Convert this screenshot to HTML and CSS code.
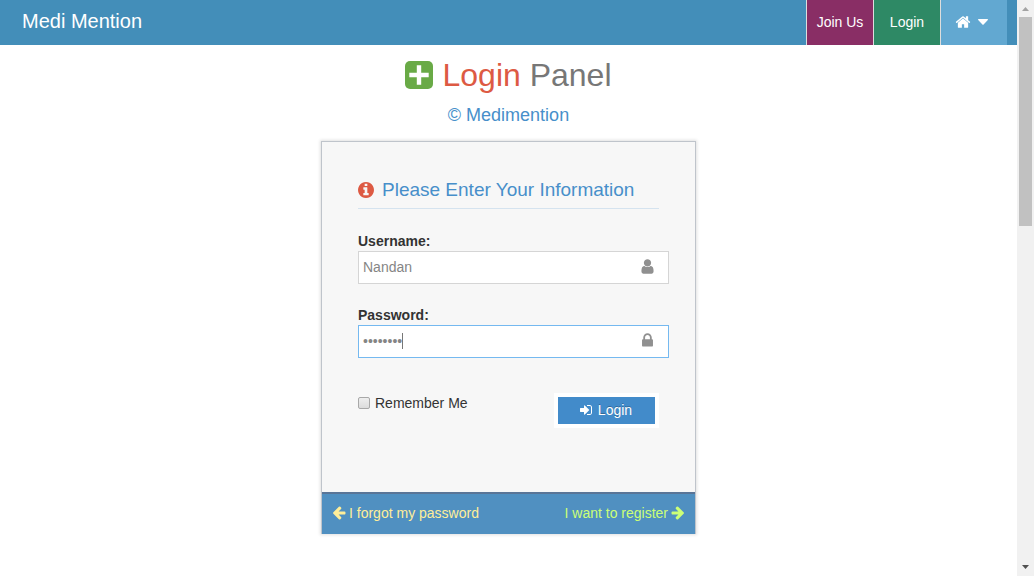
FILE: index.html
```html
<!DOCTYPE html>
<html lang="en">
<head>
<meta charset="utf-8">
<meta name="viewport" content="width=device-width, initial-scale=1">
<title>Medi Mention - Login</title>
<link rel="stylesheet" href="styles.css">
</head>
<body>
<div class="page">
  <header class="navbar">
    <a class="brand" href="#">Medi Mention</a>
    <nav class="nav">
      <a class="nav-item join" href="#">Join Us</a>
      <a class="nav-item login" href="#">Login</a>
      <button class="nav-item home" type="button" aria-label="Home menu">
        <svg class="home-icon" viewBox="0 0 1792 1792" aria-hidden="true"><path d="M1472 992v480q0 26-19 45t-45 19h-384v-384h-256v384h-384q-26 0-45-19t-19-45v-480q0-1 .5-3t.5-3l575-474 575 474q1 2 1 6zm223-69l-62 74q-8 9-21 11h-3q-13 0-21-7l-692-577-692 577q-12 8-24 7-13-2-21-11l-62-74q-8-10-7-23.5t11-21.5l719-599q32-26 76-26t76 26l244 204v-195q0-14 9-23t23-9h192q14 0 23 9t9 23v408l219 182q10 8 11 21.5t-7 23.5z"/></svg>
        <svg class="caret-down" viewBox="0 0 10 6" aria-hidden="true"><path d="M.6 0h8.800q.9.300.4 1L5.600 5.400q-.6.500-1.200 0L.2 1Q-.3.300.6 0z"/></svg>
      </button>
    </nav>
  </header>
  <main class="content">
    <h1 class="title">
      <svg class="plus" viewBox="0 0 28 28" aria-hidden="true"><rect width="28" height="28" rx="5" fill="#69aa46"/><path d="M14 6.500v15M6.500 14h15" stroke="#fff" stroke-width="4.400" stroke-linecap="square"/></svg>
      <span><span class="red">Login</span> Panel</span>
    </h1>
    <p class="company">© Medimention</p>
    <section class="card">
      <form class="card-main">
        <h2 class="card-title">
          <svg class="info" viewBox="128 128 1536 1536" aria-hidden="true"><path d="M1152 1376v-160q0-14-9-23t-23-9h-96v-512q0-14-9-23t-23-9h-320q-14 0-23 9t-9 23v160q0 14 9 23t23 9h96v320h-96q-14 0-23 9t-9 23v160q0 14 9 23t23 9h448q14 0 23-9t9-23zm-128-896v-160q0-14-9-23t-23-9h-192q-14 0-23 9t-9 23v160q0 14 9 23t23 9h192q14 0 23-9t9-23zm640 416q0 209-103 385.5t-279.5 279.5-385.5 103-385.5-103-279.5-279.5-103-385.5 103-385.5 279.5-279.5 385.5-103 385.5 103 279.5 279.5 103 385.5z"/></svg>
          Please Enter Your Information
        </h2>
        <div class="field">
          <label for="username">Username:</label>
          <div class="control">
            <input id="username" class="text" type="text" value="Nandan">
            <svg class="field-icon" viewBox="0 0 1792 1792" aria-hidden="true"><path d="M1536 1399q0 109-62.5 187t-150.5 78h-854q-88 0-150.5-78t-62.5-187q0-85 8.5-160.5t31.5-152 58.5-131 94-89 134.5-34.5q131 128 313 128t313-128q76 0 134.5 34.5t94 89 58.5 131 31.5 152 8.5 160.5zm-256-887q0 159-112.5 271.5t-271.5 112.5-271.5-112.5-112.5-271.5 112.5-271.5 271.5-112.5 271.5 112.5 112.5 271.5z"/></svg>
          </div>
        </div>
        <div class="field">
          <label for="password">Password:</label>
          <div class="control">
            <input id="password" class="text active" type="password" value="medipass">
            <span class="text-caret"></span>
            <svg class="field-icon" viewBox="0 0 1792 1792" aria-hidden="true"><path d="M640 768h512v-192q0-106-75-181t-181-75-181 75-75 181v192zm832 96v576q0 40-28 68t-68 28h-960q-40 0-68-28t-28-68v-576q0-40 28-68t68-28h32v-192q0-184 132-316t316-132 316 132 132 316v192h32q40 0 68 28t28 68z"/></svg>
          </div>
        </div>
        <div class="actions">
          <label class="remember"><input class="check" type="checkbox"><span>Remember Me</span></label>
          <button class="submit" type="button">
            <svg class="icon" viewBox="0 0 1792 1792" aria-hidden="true"><path d="M1312 896q0 26-19 45l-544 544q-19 19-45 19t-45-19-19-45v-288h-448q-26 0-45-19t-19-45v-384q0-26 19-45t45-19h448v-288q0-26 19-45t45-19 45 19l544 544q19 19 19 45zm352-352v704q0 119-84.5 203.5t-203.5 84.5h-320q-13 0-22.5-9.5t-9.5-22.5q0-4-1-20t-.5-26.5 3-23.5 10-19.5 20.5-6.5h320q66 0 113-47t47-113v-704q0-66-47-113t-113-47h-312l-11.5-1-11.5-3-8-5.5-7-9-2-13.5q0-4-1-20t-.5-26.5 3-23.5 10-19.5 20.5-6.5h320q119 0 203.5 84.5t84.5 203.5z"/></svg>
            Login
          </button>
        </div>
      </form>
      <footer class="toolbar">
        <a class="forgot" href="#"><svg class="icon" viewBox="64 128 1664 1664" aria-hidden="true"><path d="M1664 896v128q0 53-32.500 90.500t-84.500 37.500h-704l293 294q38 36 38 90t-38 90l-75 76q-37 37-90 37-52 0-91-37l-651-652q-37-37-37-90 0-52 37-91l651-650q38-38 91-38 52 0 90 38l75 74q38 38 38 91t-38 91l-293 293h704q52 0 84.500 37.500t32.500 90.500z"/></svg>I forgot my password</a>
        <a class="register" href="#">I want to register<svg class="icon flip" viewBox="64 128 1664 1664" aria-hidden="true"><path d="M1664 896v128q0 53-32.500 90.500t-84.500 37.500h-704l293 294q38 36 38 90t-38 90l-75 76q-37 37-90 37-52 0-91-37l-651-652q-37-37-37-90 0-52 37-91l651-650q38-38 91-38 52 0 90 38l75 74q38 38 38 91t-38 91l-293 293h704q52 0 84.500 37.500t32.500 90.500z"/></svg></a>
      </footer>
    </section>
  </main>
</div>
<div class="scrollbar" aria-hidden="true">
  <svg class="arrow" viewBox="0 0 17 17"><path d="M5 11h7L8.500 7z" fill="#a3a3a3"/></svg>
  <div class="track"><div class="thumb"></div></div>
  <svg class="arrow" viewBox="0 0 17 17"><path d="M5 6h7L8.500 10z" fill="#505050"/></svg>
</div>
</body>
</html>
```
FILE: styles.css
```css
* { box-sizing: border-box; }
body {
  margin: 0;
  min-height: 100vh;
  display: grid;
  grid-template-columns: 1fr 17px;
  background: #fff;
  color: #333;
  font: 14px/20px "Liberation Sans", Arial, sans-serif;
}
a { text-decoration: none; }
svg { display: block; flex: none; fill: currentColor; }
button, input { font: inherit; }
.icon { width: 14px; height: 14px; }

.navbar {
  display: flex;
  justify-content: space-between;
  height: 45px;
  padding: 0 10px 0 22px;
  background: #438eb9;
}
.brand { color: #fff; font-size: 20px; line-height: 42px; }
.nav { display: flex; }
.nav-item {
  display: flex;
  align-items: center;
  justify-content: center;
  width: 67px;
  border: 0;
  border-left: 1px solid #ddd;
  padding: 0 0 2px;
  color: #fff;
}
.join { background: #892e65; }
.login { background: #2e8965; }
.home { gap: 7px; padding-right: 5px; background: #62a8d1; }
.home-icon { width: 16px; height: 16px; }
.caret-down { width: 10px; height: 6px; }

.content { padding-top: 10px; }
.title {
  display: flex;
  align-items: center;
  justify-content: center;
  gap: 9px;
  margin: 0;
  color: #777;
  font-size: 32px;
  font-weight: 400;
  line-height: 40px;
}
.plus { width: 28px; height: 28px; }
.red { color: #dd5a43; }
.company {
  margin: 10px 0 16px;
  color: #478fca;
  font-size: 18px;
  line-height: 20px;
  text-align: center;
}

.card {
  max-width: 375px;
  margin: 0 auto;
  border: 1px solid #bfc4cb;
  border-bottom: 0;
  background: #f7f7f7;
  box-shadow: 0 0 3px 1px rgba(0, 0, 0, .12);
}
.card-main { padding: 34px 36px 64px; }
.card-title {
  display: flex;
  align-items: center;
  gap: 8px;
  margin: 0 0 22px;
  padding-bottom: 5px;
  border-bottom: 1px solid #d5e3ef;
  color: #478fca;
  font-size: 19px;
  font-weight: 400;
  line-height: 27px;
}
.info { width: 16px; height: 16px; color: #dd5a43; }
.field { margin-bottom: 21px; }
.field label { display: block; font-weight: 700; }
.control { position: relative; margin-right: -10px; }
.text {
  display: block;
  width: 100%;
  height: 33px;
  border: 1px solid #d5d5d5;
  border-radius: 0;
  padding: 0 36px 2px 4px;
  background: #fff;
  color: #858585;
  outline: 0;
}
.active { border-color: #75b9f0; }
.text-caret {
  position: absolute;
  left: 44px;
  top: 8px;
  width: 1px;
  height: 16px;
  background: #777;
}
.field-icon {
  position: absolute;
  right: 13px;
  top: 7px;
  width: 17px;
  height: 17px;
  color: #909090;
}
.actions {
  display: flex;
  align-items: flex-start;
  justify-content: space-between;
  padding-top: 14px;
}
.remember { display: flex; align-items: center; gap: 5px; }
.check {
  appearance: none;
  width: 12px;
  height: 12px;
  margin: 0;
  border: 1px solid #a8a8a8;
  border-radius: 2px;
  background: linear-gradient(#eee, #dcdcdc);
}
.submit {
  display: flex;
  align-items: center;
  justify-content: center;
  gap: 5px;
  width: 105px;
  height: 35px;
  border: 4px solid #fff;
  padding: 0 2px 2px 0;
  background: #428bca;
  color: #fff;
  text-shadow: 0 -1px 0 rgba(0, 0, 0, .25);
}
.toolbar {
  display: flex;
  justify-content: space-between;
  padding: 9px 10px 11px;
  border-top: 2px solid #597597;
  background: #5090c1;
}
.toolbar a { display: flex; align-items: center; gap: 3px; }
.forgot { color: #fe9; }
.register { color: #cf7; }
.flip { transform: scaleX(-1); }

.scrollbar {
  display: flex;
  flex-direction: column;
  background: #f1f1f1;
}
.arrow { width: 17px; height: 17px; }
.track { flex: 1; padding: 0 2px; }
.thumb { height: 38.6%; background: #c1c1c1; }
```
